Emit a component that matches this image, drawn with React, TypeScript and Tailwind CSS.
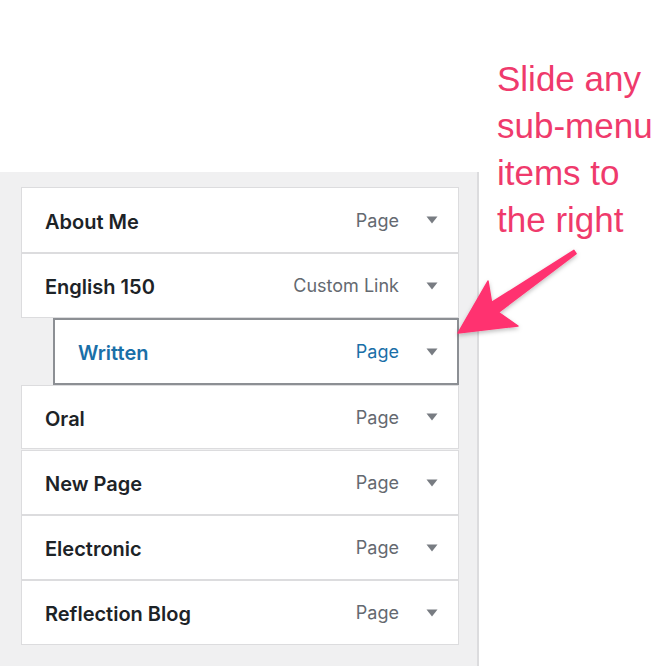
import React from "react";

type Item = {
  title: string;
  kind: string;
  height: string;
  sub?: boolean;
  gapTop?: boolean;
};

const ITEMS: Item[] = [
  { title: "About Me", kind: "Page", height: "h-[66px]" },
  { title: "English 150", kind: "Custom Link", height: "h-[65px]" },
  { title: "Written", kind: "Page", height: "h-[67px]", sub: true },
  { title: "Oral", kind: "Page", height: "h-[64px]" },
  { title: "New Page", kind: "Page", height: "h-[65px]", gapTop: true },
  { title: "Electronic", kind: "Page", height: "h-[65px]" },
  { title: "Reflection Blog", kind: "Page", height: "h-[65px]" },
];

function Caret() {
  return (
    <svg width="12" height="8" viewBox="0 0 12 8" className="shrink-0">
      <path d="M0.5 0.5 L11.5 0.5 L6 7.5 Z" fill="#787c82" />
    </svg>
  );
}

function MenuItem({ item }: { item: Item }) {
  const box = item.sub
    ? "ml-[32px] w-[406px] border-2 border-[#8c8f94] pl-[23px] pr-[19px]"
    : "w-[438px] border border-[#dcdcde] pl-[23px] pr-[20px]";
  return (
    <div
      className={`flex items-center justify-between bg-white ${box} ${item.height} ${
        item.gapTop ? "mt-px" : ""
      }`}
    >
      <span
        className={`mt-[3px] text-[20px] font-semibold ${
          item.sub ? "text-[#1a6fa8]" : "text-[#1d2327]"
        }`}
      >
        {item.title}
      </span>
      <div className="flex items-center gap-[27px]">
        <span
          className={`text-[18px] ${
            item.sub ? "text-[#1a6fa8]" : "text-[#646970]"
          }`}
        >
          {item.kind}
        </span>
        <Caret />
      </div>
    </div>
  );
}

export default function App() {
  return (
    <div
      className="relative h-[666px] w-[660px] overflow-hidden bg-white"
      style={{ fontFamily: "Inter, 'Liberation Sans', sans-serif" }}
    >
      <div className="pt-[172px]">
        <div className="h-[494px] w-[479px] border-r-2 border-[#dcdcde] bg-[#f0f0f1] pl-[21px] pt-[15px]">
          <div className="flex flex-col">
            {ITEMS.map((item) => (
              <MenuItem key={item.title} item={item} />
            ))}
          </div>
        </div>
      </div>

      <div
        className="absolute left-[497px] top-[55px] whitespace-nowrap text-[35px] leading-[47px] text-[#ef3a6c]"
        style={{ fontFamily: "'Liberation Sans', Arial, sans-serif" }}
      >
        <div>Slide any</div>
        <div>sub-menu</div>
        <div>items to</div>
        <div>the right</div>
      </div>

      <svg
        className="pointer-events-none absolute left-0 top-0"
        width="660"
        height="666"
        viewBox="0 0 660 666"
      >
        <defs>
          <filter id="sh" x="-20%" y="-20%" width="140%" height="140%">
            <feDropShadow dx="0" dy="2" stdDeviation="2" floodColor="#000" floodOpacity="0.25" />
          </filter>
        </defs>
        <polygon
          points="573.9,250.4 491.6,302.5 488,281 458,333 518,326 498.4,312.3 576.1,253.6"
          fill="#ff3370"
          stroke="#ff3370"
          strokeWidth="1.5"
          strokeLinejoin="round"
          filter="url(#sh)"
        />
      </svg>
    </div>
  );
}
